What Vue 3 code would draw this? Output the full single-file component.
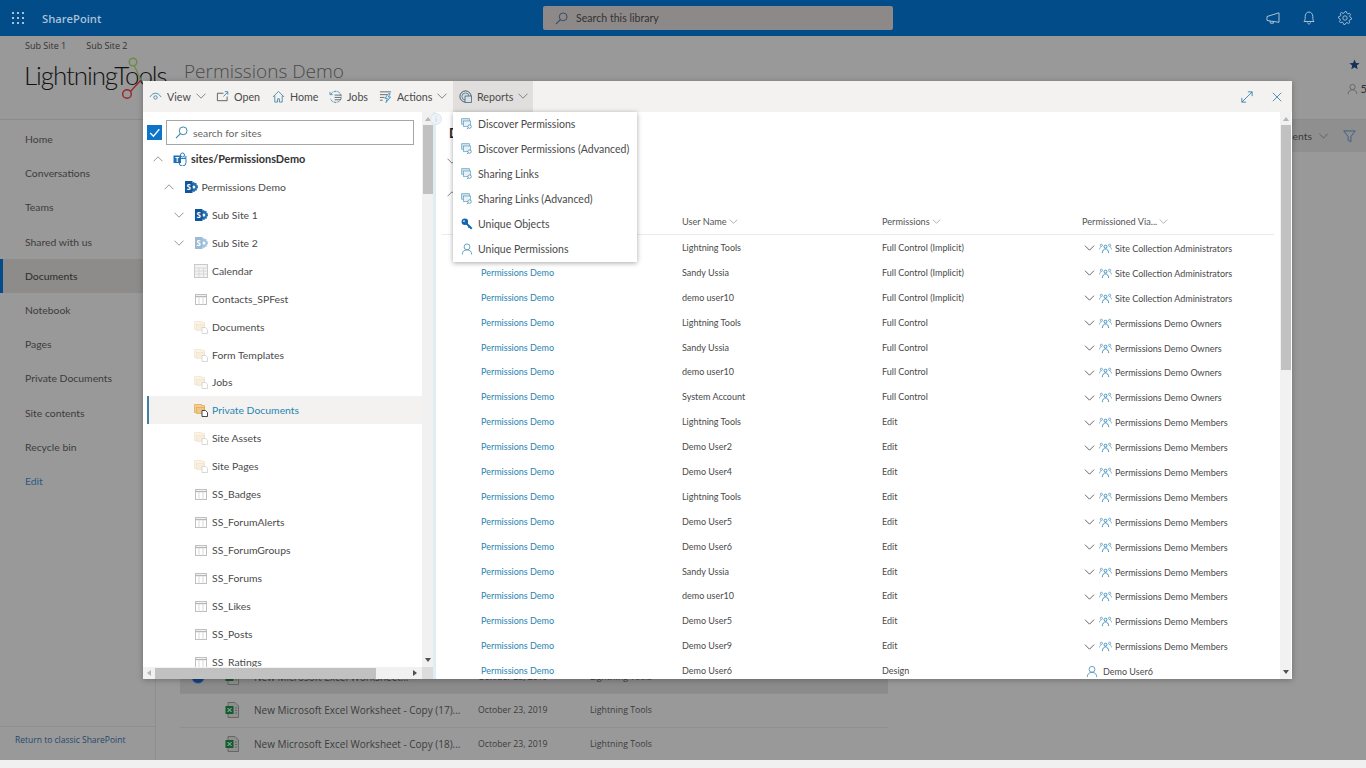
<script setup>
const nav = ['Home','Conversations','Teams','Shared with us','Documents','Notebook','Pages','Private Documents','Site contents','Recycle bin','Edit']

const tools = [
  { label: 'View', icon: 'i-eye', chev: true, cls: 'w-view' },
  { label: 'Open', icon: 'i-open', cls: 'w-open' },
  { label: 'Home', icon: 'i-home', cls: 'w-home' },
  { label: 'Jobs', icon: 'i-jobs', cls: 'w-jobs' },
  { label: 'Actions', icon: 'i-actions', chev: true, cls: 'w-actions' },
  { label: 'Reports', icon: 'i-reports', chev: true, cls: 'w-reports active' }
]

const tree = [
  { t: 'sites/PermissionsDemo', lvl: 0, icon: 'i-teams', chev: 'up', bold: true },
  { t: 'Permissions Demo', lvl: 1, icon: 'i-sp', chev: 'up' },
  { t: 'Sub Site 1', lvl: 2, icon: 'i-sp', chev: 'down' },
  { t: 'Sub Site 2', lvl: 2, icon: 'i-sp', chev: 'down', faded: true },
  { t: 'Calendar', lvl: 2, icon: 'i-cal' },
  { t: 'Contacts_SPFest', lvl: 2, icon: 'i-list' },
  { t: 'Documents', lvl: 2, icon: 'i-lib' },
  { t: 'Form Templates', lvl: 2, icon: 'i-lib' },
  { t: 'Jobs', lvl: 2, icon: 'i-lib' },
  { t: 'Private Documents', lvl: 2, icon: 'i-lib-on', sel: true },
  { t: 'Site Assets', lvl: 2, icon: 'i-lib' },
  { t: 'Site Pages', lvl: 2, icon: 'i-lib' },
  { t: 'SS_Badges', lvl: 2, icon: 'i-list' },
  { t: 'SS_ForumAlerts', lvl: 2, icon: 'i-list' },
  { t: 'SS_ForumGroups', lvl: 2, icon: 'i-list' },
  { t: 'SS_Forums', lvl: 2, icon: 'i-list' },
  { t: 'SS_Likes', lvl: 2, icon: 'i-list' },
  { t: 'SS_Posts', lvl: 2, icon: 'i-list' },
  { t: 'SS_Ratings', lvl: 2, icon: 'i-list' }
]

const menu = [
  { t: 'Discover Permissions', icon: 'i-report' },
  { t: 'Discover Permissions (Advanced)', icon: 'i-report' },
  { t: 'Sharing Links', icon: 'i-report' },
  { t: 'Sharing Links (Advanced)', icon: 'i-report' },
  { t: 'Unique Objects', icon: 'i-key' },
  { t: 'Unique Permissions', icon: 'i-person' }
]

const sca = 'Site Collection Administrators'
const own = 'Permissions Demo Owners'
const mem = 'Permissions Demo Members'
const rows = [
  ['Lightning Tools','Full Control (Implicit)',sca],
  ['Sandy Ussia','Full Control (Implicit)',sca],
  ['demo user10','Full Control (Implicit)',sca],
  ['Lightning Tools','Full Control',own],
  ['Sandy Ussia','Full Control',own],
  ['demo user10','Full Control',own],
  ['System Account','Full Control',own],
  ['Lightning Tools','Edit',mem],
  ['Demo User2','Edit',mem],
  ['Demo User4','Edit',mem],
  ['Lightning Tools','Edit',mem],
  ['Demo User5','Edit',mem],
  ['Demo User6','Edit',mem],
  ['Sandy Ussia','Edit',mem],
  ['demo user10','Edit',mem],
  ['Demo User5','Edit',mem],
  ['Demo User9','Edit',mem],
  ['Demo User6','Design','Demo User6',true]
]

const docs = [
  { t: 'New Microsoft Excel Worksheet...', sel: true },
  { t: 'New Microsoft Excel Worksheet - Copy (17)...' },
  { t: 'New Microsoft Excel Worksheet - Copy (18)...' }
]

const gearPath = (() => {
  const pts = []
  const teeth = 8
  for (let i = 0; i < teeth * 4; i++) {
    const a = (i / (teeth * 4)) * Math.PI * 2
    const r = i % 4 < 2 ? 6.6 : 5
    pts.push((7 + r * Math.cos(a)).toFixed(2) + ' ' + (7 + r * Math.sin(a)).toFixed(2))
  }
  return 'M' + pts.join('L') + 'Z'
})()
</script>

<template>
  <div class="page">
    <svg class="defs" aria-hidden="true">
      <symbol id="i-chev" viewBox="0 0 10 6"><path d="M.5.7 5 5.2 9.5.7" fill="none" stroke="currentColor" stroke-width=".9"/></symbol>
      <symbol id="i-chev-up" viewBox="0 0 10 6"><path d="M.5 5.3 5 .8l4.500 4.500" fill="none" stroke="currentColor" stroke-width=".9"/></symbol>
      <symbol id="i-search" viewBox="0 0 14 14"><circle cx="8.800" cy="5.200" r="4.200" fill="none" stroke="currentColor" stroke-width="1"/><path d="M5.800 8.200 1 13" stroke="currentColor" stroke-width="1.100"/></symbol>
      <symbol id="i-eye" viewBox="0 0 14 14"><path d="M1 7.500C3 4.500 5 3.500 7 3.500s4 1 6 4" fill="none" stroke="#3f88ad" stroke-width="1"/><circle cx="7" cy="8" r="1.800" fill="none" stroke="#3f88ad" stroke-width="1"/></symbol>
      <symbol id="i-open" viewBox="0 0 14 14"><path d="M8 3.500H1.500v8H12V7" fill="none" stroke="#4a4a4a" stroke-width=".9"/><path d="M8 7l4.500-4.500M9.500 1.800h3.200v3.200" fill="none" stroke="#3f88ad" stroke-width="1"/></symbol>
      <symbol id="i-home" viewBox="0 0 14 14"><path d="M1 7.500 7 1.500l6 6M3 6v7h3V9.500h2V13h3V6" fill="none" stroke="#3f7f9f" stroke-width=".9"/></symbol>
      <symbol id="i-jobs" viewBox="0 0 14 14"><path d="M2 4.500A6 6 0 1 1 1.500 9" fill="none" stroke="#3f88ad" stroke-width="1" stroke-dasharray="3 1"/><path d="M1 2v3h3" fill="none" stroke="#3f88ad" stroke-width=".9"/><path d="M6 5.500h7M6 8h7M6 10.500h7" stroke="#555" stroke-width=".9"/></symbol>
      <symbol id="i-actions" viewBox="0 0 14 14"><path d="M1 2h12M1 5h8M1 8h5M1 11h3" stroke="#555" stroke-width=".9"/><path d="M10 4 6.500 9H9l-1.500 4.500L12.500 7.500H10L12 4z" fill="none" stroke="#2f88b5" stroke-width=".9"/></symbol>
      <symbol id="i-reports" viewBox="0 0 14 14"><circle cx="7" cy="7" r="6" fill="none" stroke="#4a4a4a" stroke-width="1"/><circle cx="7" cy="7" r="3.800" fill="none" stroke="#3f88ad" stroke-width="1"/><rect x="6.500" y="6.500" width="7" height="7" fill="#e1dfdd" stroke="#3f6f8f" stroke-width=".9"/></symbol>
      <symbol id="i-expand" viewBox="0 0 14 14"><path d="M1 13 13 1M8 1h5v5M1 8v5h5" fill="none" stroke="#2f7ea8" stroke-width="1"/></symbol>
      <symbol id="i-close" viewBox="0 0 12 12"><path d="M1 1l10 10M11 1 1 11" stroke="#2f7ea8" stroke-width="1"/></symbol>
      <symbol id="i-sp" viewBox="0 0 14 14"><circle cx="9" cy="7" r="4.200" fill="#1f6fb2" stroke="#1f6fb2" stroke-width="1.600" stroke-dasharray="1.400 1"/><circle cx="9.800" cy="7" r="1.500" fill="#fff"/><rect x="1" y="1" width="7.500" height="12" fill="#10569a"/><text x="4.750" y="10" font-size="8" font-weight="700" text-anchor="middle" fill="#fff" font-family="Open Sans, sans-serif">S</text></symbol>
      <symbol id="i-teams" viewBox="0 0 14 14"><circle cx="9.500" cy="3" r="2" fill="none" stroke="#2b7cc0"/><circle cx="12.500" cy="5" r="1.300" fill="#6fa8d0"/><path d="M6 6.500h7v4a3.500 3.500 0 0 1-7 0z" fill="none" stroke="#2b7cc0"/><rect x="0.500" y="3.500" width="7.500" height="7.500" fill="#1f6fb2"/><text x="4.250" y="9.600" font-size="6.500" font-weight="700" text-anchor="middle" fill="#fff" font-family="Open Sans, sans-serif">T</text></symbol>
      <symbol id="i-cal" viewBox="0 0 14 14"><rect x=".5" y=".5" width="13" height="13" fill="#f4f3f2" stroke="#c9c9c9"/><path d="M.5 4h13M.5 7h13M.5 10h13M5 4v9.500M9.500 4v9.500" stroke="#d2d2d2" stroke-width=".8"/></symbol>
      <symbol id="i-list" viewBox="0 0 14 14"><rect x="1.500" y="2.500" width="11" height="10" fill="#fff" stroke="#c0c0c0"/><path d="M1.500 4.500h11" stroke="#b5b5b5" stroke-width="1.400"/><path d="M5 4.500v8M9 4.500v8" stroke="#cfcfcf" stroke-width=".8"/></symbol>
      <symbol id="i-lib" viewBox="0 0 14 14"><path d="M.5 1.500h7v1h3v7h-10z" fill="#fbf3e4" stroke="#f3e6cf" stroke-width=".8"/><rect x="2.500" y="4.500" width="8" height="6" fill="#f9eedb" stroke="#f1e1c6" stroke-width=".6"/><path d="M8 7.500h3.500l2 2v4H8z" fill="#fff" stroke="#cfcfcf" stroke-width=".8"/></symbol>
      <symbol id="i-lib-on" viewBox="0 0 14 14"><path d="M.5 1.500h7v1h3v7h-10z" fill="#f3cf96" stroke="#e4a94f" stroke-width=".8"/><rect x="2.500" y="4.500" width="8" height="6" fill="#f0c684" stroke="#dd9f48" stroke-width=".6"/><path d="M8 7.500h3.500l2 2v4H8z" fill="#fff" stroke="#333" stroke-width=".9"/></symbol>
      <symbol id="i-report" viewBox="0 0 14 14"><rect x=".8" y=".8" width="9" height="6.500" fill="#cfe3ef" stroke="#5f9dbd" stroke-width=".8"/><rect x="2.800" y="3.500" width="8.500" height="6.500" fill="#e8f1f7" stroke="#5f9dbd" stroke-width=".8"/><circle cx="10" cy="10" r="2" fill="#fff" stroke="#3f88ad" stroke-width=".9"/><path d="M8.500 11.500 7 13" stroke="#3f88ad"/></symbol>
      <symbol id="i-key" viewBox="0 0 14 14"><circle cx="4.500" cy="4.500" r="3.800" fill="#1167ae"/><circle cx="3.500" cy="3.500" r="1" fill="#fff"/><path d="M6 6l6.500 6.500" stroke="#1167ae" stroke-width="2.400"/><path d="M10 9.500l-1.500 1.500" stroke="#1167ae" stroke-width="1.600"/></symbol>
      <symbol id="i-person" viewBox="0 0 14 14"><circle cx="7" cy="4.500" r="3.400" fill="none" stroke="#4f93b8" stroke-width="1"/><path d="M1.500 13.500c0-3.500 2.200-5.500 5.500-5.500s5.500 2 5.500 5.500" fill="none" stroke="#4f93b8" stroke-width="1"/></symbol>
      <symbol id="i-group" viewBox="0 0 14 12"><circle cx="7" cy="4" r="1.600" fill="none" stroke="#1f7fb0" stroke-width=".9"/><path d="M3.500 11c.3-3 1.600-4.500 3.500-4.500s3.200 1.500 3.500 4.500" fill="none" stroke="#1f7fb0" stroke-width=".9"/><circle cx="2.500" cy="2.500" r="1.200" fill="none" stroke="#4f97bf" stroke-width=".8"/><circle cx="11.500" cy="2.500" r="1.200" fill="none" stroke="#4f97bf" stroke-width=".8"/><path d="M.5 7c0-1.500.8-2.800 2-2.800M13.500 7c0-1.500-.8-2.800-2-2.800" fill="none" stroke="#4f97bf" stroke-width=".8"/></symbol>
      <symbol id="i-xl" viewBox="0 0 14 16"><path d="M3 .5h7l3.500 3.500v11.500H3z" fill="#8f8f8f" stroke="#5a5a5a" stroke-width=".8"/><rect x=".5" y="4" width="8" height="8" fill="#14592f"/><path d="M2.500 6l4 4M6.500 6l-4 4" stroke="#a8c8b0" stroke-width="1"/><path d="M10 6h2M10 8.500h2M10 11h2" stroke="#5a5a5a" stroke-width=".8"/></symbol>
      <symbol id="i-waffle" viewBox="0 0 12 12"><g fill="currentColor"><rect x="0" y="0" width="2" height="2"/><rect x="5" y="0" width="2" height="2"/><rect x="10" y="0" width="2" height="2"/><rect x="0" y="5" width="2" height="2"/><rect x="5" y="5" width="2" height="2"/><rect x="10" y="5" width="2" height="2"/><rect x="0" y="10" width="2" height="2"/><rect x="5" y="10" width="2" height="2"/><rect x="10" y="10" width="2" height="2"/></g></symbol>
      <symbol id="i-mega" viewBox="0 0 14 12"><path d="M13 .8v9.500L1 8.500v-4zM4 9l.5 2.200h3L7 9.500" fill="none" stroke="currentColor" stroke-width="1"/></symbol>
      <symbol id="i-bell" viewBox="0 0 12 14"><path d="M1 10.500c1-1 1.200-2 1.200-5C2.200 3 3.800 1 6 1s3.800 2 3.800 4.500c0 3 .2 4 1.200 5zM4.500 11.500c.2 1 .8 1.500 1.500 1.500s1.300-.5 1.500-1.500" fill="none" stroke="currentColor" stroke-width="1"/></symbol>
      <symbol id="i-gear" viewBox="0 0 14 14"><path :d="gearPath" fill="none" stroke="currentColor" stroke-width=".9"/><circle cx="7" cy="7" r="2.200" fill="none" stroke="currentColor" stroke-width=".9"/></symbol>
      <symbol id="i-filter" viewBox="0 0 14 14"><path d="M.8 1h12.400L8.500 7v5.800L5.500 11V7z" fill="none" stroke="currentColor" stroke-width="1"/></symbol>
      <symbol id="i-star" viewBox="0 0 12 12"><path d="M6 .5l1.600 3.800 4 .3-3.100 2.600 1 4L6 9l-3.500 2.200 1-4L.4 4.600l4-.3z" fill="currentColor"/></symbol>
    </svg>

    <header class="topbar">
      <svg class="waffle"><use href="#i-waffle"/></svg>
      <span class="brand">SharePoint</span>
      <div class="global-search">
        <svg class="gs-icon"><use href="#i-search"/></svg>
        <span>Search this library</span>
      </div>
      <div class="top-icons">
        <svg class="ti"><use href="#i-mega"/></svg>
        <svg class="ti"><use href="#i-bell"/></svg>
        <svg class="ti"><use href="#i-gear"/></svg>
      </div>
    </header>

    <section class="site-head">
      <div class="subnav"><span>Sub Site 1</span><span>Sub Site 2</span></div>
      <div class="site-row">
        <div class="logo">
          <span class="logo-text">LightningTools</span>
          <svg class="logo-nodes" viewBox="0 0 40 50">
            <path d="M18 23 7 35" fill="none" stroke="#94272c" stroke-width="1.300"/>
            <path d="M11 8 18 23" fill="none" stroke="#6e8a45" stroke-width="1.300"/>
            <circle cx="10" cy="5" r="3.800" fill="#999" stroke="#6e8a45" stroke-width="1.400"/>
            <circle cx="4" cy="37" r="4.300" fill="#999" stroke="#94272c" stroke-width="1.400"/>
          </svg>
        </div>
        <h1 class="site-title">Permissions Demo</h1>
        <div class="site-tools">
          <svg class="star"><use href="#i-star"/></svg>
          <div class="members"><svg class="mem-icon"><use href="#i-person"/></svg><span>5</span></div>
        </div>
      </div>
    </section>

    <div class="below">
      <nav class="leftnav">
        <ul class="nav-list">
          <li v-for="n in nav" :key="n" :class="['nav-item', { current: n === 'Documents', edit: n === 'Edit' }]">{{ n }}</li>
        </ul>
        <div class="classic">Return to classic SharePoint</div>
      </nav>
      <main class="main">
        <div class="cmdbar">
          <span class="cmd-text">All Documents</span>
          <svg class="cmd-chev"><use href="#i-chev"/></svg>
          <svg class="cmd-filter"><use href="#i-filter"/></svg>
        </div>
        <div class="doclist">
          <div v-for="d in docs" :key="d.t" :class="['doc', { selected: d.sel }]">
            <span class="doc-check"><i v-if="d.sel" class="check-dot"></i></span>
            <svg class="xl"><use href="#i-xl"/></svg>
            <span class="doc-name">{{ d.t }}</span>
            <span class="doc-date">October 23, 2019</span>
            <span class="doc-author">Lightning Tools</span>
          </div>
        </div>
      </main>
    </div>
    <div class="winstrip"></div>

    <div class="modal">
      <div class="toolbar">
        <div v-for="b in tools" :key="b.label" :class="['tbtn', b.cls]">
          <svg class="tb-icon"><use :href="'#' + b.icon"/></svg>
          <span>{{ b.label }}</span>
          <svg v-if="b.chev" class="tb-chev"><use href="#i-chev"/></svg>
        </div>
        <div class="tb-right">
          <svg class="tb-expand"><use href="#i-expand"/></svg>
          <svg class="tb-close"><use href="#i-close"/></svg>
        </div>
      </div>

      <div class="modal-body">
        <aside class="left">
          <div class="left-main">
            <div class="left-content">
              <div class="searchrow">
                <span class="checkbox"><svg viewBox="0 0 14 14"><path d="M3 7.500 6 10.500 11.500 4" fill="none" stroke="#fff" stroke-width="1.200"/></svg></span>
                <div class="searchbox">
                  <svg class="sb-icon"><use href="#i-search"/></svg>
                  <span>search for sites</span>
                </div>
              </div>
              <div class="tree">
                <div v-for="r in tree" :key="r.t" :class="['node', { sel: r.sel, bold: r.bold, faded: r.faded }]" :style="{ paddingLeft: (10 + r.lvl * 10.500) + 'px' }">
                  <span class="node-chev">
                    <svg v-if="r.chev === 'up'"><use href="#i-chev-up"/></svg>
                    <svg v-else-if="r.chev === 'down'"><use href="#i-chev"/></svg>
                  </span>
                  <svg class="node-icon"><use :href="'#' + r.icon"/></svg>
                  <span class="node-text">{{ r.t }}</span>
                </div>
              </div>
            </div>
            <div class="vscroll">
              <i class="arrow up"></i>
              <i class="thumb short"></i>
              <i class="flex-fill"></i>
              <i class="arrow down"></i>
            </div>
          </div>
          <div class="hscroll">
            <i class="arrow left-a"></i>
            <i class="hthumb"></i>
            <i class="flex-fill"></i>
            <i class="arrow right-a"></i>
            <i class="corner"></i>
          </div>
        </aside>

        <div class="splitter"><span class="info-dot">i</span></div>

        <section class="right">
          <div class="right-content">
            <h2 class="report-title">Discover Permissions</h2>
            <div class="grp"><svg><use href="#i-chev"/></svg></div>
            <div class="grp g2"><svg><use href="#i-chev-up"/></svg></div>
            <div class="thead">
              <span class="th">Site<svg><use href="#i-chev"/></svg></span>
              <span class="th">User Name<svg><use href="#i-chev"/></svg></span>
              <span class="th">Permissions<svg><use href="#i-chev"/></svg></span>
              <span class="th">Permissioned Via...<svg><use href="#i-chev"/></svg></span>
            </div>
            <div v-for="(r, i) in rows" :key="i" class="trow">
              <span class="link">Permissions Demo</span>
              <span>{{ r[0] }}</span>
              <span>{{ r[1] }}</span>
              <span v-if="r[3]" class="via user"><svg class="via-person"><use href="#i-person"/></svg>{{ r[2] }}</span>
              <span v-else class="via"><svg class="via-chev"><use href="#i-chev"/></svg><svg class="via-group"><use href="#i-group"/></svg>{{ r[2] }}</span>
            </div>
          </div>
          <div class="vscroll rs">
            <i class="arrow up"></i>
            <i class="thumb long"></i>
            <i class="flex-fill"></i>
            <i class="arrow down"></i>
          </div>
        </section>

        <ul class="menu">
          <li v-for="m in menu" :key="m.t" class="menu-item">
            <svg class="menu-icon"><use :href="'#' + m.icon"/></svg>
            <span>{{ m.t }}</span>
          </li>
        </ul>
      </div>
    </div>
  </div>
</template>

<style scoped>
.page {
  position: relative;
  display: flex;
  flex-direction: column;
  width: 1366px;
  height: 768px;
  overflow: hidden;
  background: #999;
  font-family: Lato, "Open Sans", sans-serif;
  font-size: 10.500px;
  color: #3c3c3c;
}
.defs { position: absolute; width: 0; height: 0; }
svg { display: block; flex: none; }

/* top bar */
.topbar {
  flex: none;
  position: relative;
  height: 36px;
  background: #014c89;
  display: flex;
  align-items: center;
  color: #a9c2d6;
}
.waffle { width: 12px; height: 12px; margin-left: 12px; color: #a9c2d6; }
.brand { margin-left: 18px; font-family: "Open Sans", sans-serif; font-size: 11.200px; font-weight: 600; }
.global-search {
  position: absolute;
  left: 543px;
  top: 6px;
  width: 350px;
  height: 24px;
  box-sizing: border-box;
  background: #8d8989;
  border-radius: 2px;
  display: flex;
  align-items: center;
  padding-left: 12px;
  color: #333;
  font-size: 10.600px;
}
.gs-icon { width: 13px; height: 13px; margin-right: 8px; color: #33495c; }
.top-icons { margin-left: auto; display: flex; align-items: center; gap: 22px; padding-right: 14px; }
.ti { width: 14px; height: 14px; color: #a9c2d6; }

/* site header */
.site-head { flex: none; height: 84px; box-sizing: border-box; padding-left: 25px; border-bottom: 1px solid #8b8b8b; }
.subnav { display: flex; gap: 20px; padding-top: 3px; font-family: "Open Sans", sans-serif; font-size: 9px; line-height: 13px; color: #333; }
.site-row { display: flex; align-items: flex-start; margin-top: 5px; }
.logo { position: relative; width: 159px; height: 45px; }
.logo-text { position: absolute; left: -1px; top: 0; font-family: Lato, sans-serif; font-weight: 300; font-size: 26px; line-height: 36px; color: #111; letter-spacing: -1.100px; white-space: nowrap; }
.logo-nodes { position: absolute; left: 98px; top: 0; width: 40px; height: 50px; overflow: visible; }
.site-title { margin: 1px 0 0; font-family: "Open Sans", sans-serif; font-size: 19px; font-weight: 300; line-height: 26px; color: #4a4a4a; }
.site-tools { margin-left: auto; display: flex; flex-direction: column; align-items: flex-end; padding-top: 2px; gap: 12px; width: 40px; }
.star { width: 11px; height: 11px; color: #14305a; margin-right: 6px; }
.members { display: flex; align-items: center; gap: 3px; color: #333; margin-right: -1px; font-size: 11px; }
.mem-icon { width: 11px; height: 12px; opacity: .75; filter: grayscale(1) brightness(.55); }

/* lower page */
.below { flex: 1; min-height: 0; display: flex; }
.leftnav { width: 156px; flex: none; box-sizing: border-box; border-right: 1px solid #8f8f8f; display: flex; flex-direction: column; justify-content: space-between; }
.nav-list { list-style: none; margin: 2px 0 0; padding: 0; }
.nav-item { height: 34.200px; line-height: 34.200px; padding-left: 25px; box-sizing: border-box; color: #3c3c3c; font-size: 10.400px; }
.nav-item.current { background: #8e8c8b; border-left: 3px solid #014c89; padding-left: 22px; color: #2b2b2b; }
.nav-item.edit { color: #2e5a80; }
.classic { height: 33px; line-height: 26px; padding-left: 15px; border-top: 1px solid #8f8f8f; color: #25486b; font-family: "Open Sans", sans-serif; font-size: 8.500px; }

.main { flex: 1; min-width: 0; display: flex; flex-direction: column; justify-content: space-between; }
.cmdbar { height: 32px; background: #8f8f8f; display: flex; align-items: center; justify-content: flex-end; padding-right: 10px; }
.cmd-text { font-size: 10.400px; color: #3c3c3c; }
.cmd-chev { width: 9px; height: 6px; margin-left: 7px; color: #555; }
.cmd-filter { width: 13px; height: 13px; margin-left: 15px; color: #3b5a85; }
.doclist { margin-left: 24px; width: 708px; }
.doc { display: flex; align-items: center; height: 33.500px; border-top: 1px solid #8f8f8f; box-sizing: border-box; font-family: "Open Sans", sans-serif; font-size: 10px; color: #3c3c3c; }
.doc.selected { background: #8b8b8b; }
.doc-check { width: 45px; flex: none; display: flex; padding-left: 11px; box-sizing: border-box; }
.check-dot { width: 12px; height: 12px; border-radius: 50%; background: #16437a; border: 1px solid #5b7fa8; }
.xl { width: 14px; height: 16px; margin-right: 15px; }
.doc-name { width: 224px; flex: none; white-space: nowrap; }
.doc-date { width: 112px; flex: none; font-size: 8.700px; }
.doc-author { font-size: 8.800px; }
.winstrip { flex: none; height: 8px; background: #f0f0f0; }

/* modal */
.modal {
  position: absolute;
  left: 143px;
  top: 81px;
  width: 1149px;
  height: 598px;
  background: #fff;
  display: flex;
  flex-direction: column;
  box-shadow: 0 1px 6px rgba(0,0,0,.28);
}
.toolbar { flex: none; height: 31px; background: #f3f2f1; display: flex; align-items: stretch; color: #4a4a4a; font-size: 10.700px; }
.tbtn { display: flex; align-items: center; padding: 0 0 1px 6px; box-sizing: border-box; }
.tbtn span { margin-left: 5px; }
.w-view { width: 67px; }
.w-open { width: 56px; }
.w-home { width: 57px; }
.w-jobs { width: 50px; }
.w-actions { width: 80px; }
.w-reports { width: 80px; }
.tbtn.active { background: #e1dfdd; }
.tb-icon { width: 13px; height: 13px; }
.tb-chev { width: 10px; height: 6px; margin-left: 5px; color: #777; }
.tb-right { margin-left: auto; display: flex; align-items: center; padding-right: 10px; gap: 19px; }
.tb-expand { width: 12px; height: 12px; }
.tb-close { width: 10px; height: 10px; }

.modal-body { position: relative; flex: 1; min-height: 0; display: flex; }
.left { width: 290px; flex: none; display: flex; flex-direction: column; }
.left-main { flex: 1; min-height: 0; display: flex; }
.left-content { flex: 1; min-width: 0; overflow: hidden; }
.searchrow { height: 33px; display: flex; align-items: flex-end; padding-left: 4px; }
.checkbox { width: 15px; height: 15px; background: #0c74c9; margin-bottom: 5px; margin-right: 4px; }
.checkbox svg { width: 15px; height: 15px; }
.searchbox { width: 248px; height: 25px; box-sizing: border-box; border: 1px solid #a6a6a6; background: #fff; display: flex; align-items: center; padding-left: 8px; color: #666; font-size: 10.400px; }
.sb-icon { width: 13px; height: 13px; margin-right: 5px; color: #2f7ea8; }
.node { height: 27.950px; display: flex; align-items: center; box-sizing: border-box; color: #4a4a4a; font-size: 10.400px; position: relative; white-space: nowrap; }
.node-chev { width: 11px; height: 6px; flex: none; color: #8a8a8a; margin-right: 9px; }
.node-chev svg { width: 10px; height: 6px; }
.node-icon { width: 14px; height: 14px; margin-right: 4px; }
.node.bold { font-weight: 700; color: #333; font-size: 10.900px; }
.node.faded .node-icon { opacity: .4; }
.node.sel { background: #f3f2f1; color: #2a84b0; margin-left: 4px; }
.node.sel::before { content: ""; position: absolute; left: 0; top: 0; bottom: 0; width: 2px; background: #3f7f9f; }
.node.sel .node-chev { margin-left: -4px; }

.vscroll { width: 11px; flex: none; background: #f1f1f1; display: flex; flex-direction: column; align-items: center; }
.vscroll .arrow.up { margin-top: 5px; margin-bottom: 4px; }
.vscroll .arrow.down { margin-top: 4px; margin-bottom: 5px; }
.thumb { display: block; width: 10px; background: #c1c1c1; flex: none; margin-left: 1px; }
.thumb.short { height: 69px; }
.thumb.long { height: 245px; }
.flex-fill { flex: 1; display: block; }
.arrow { display: block; width: 0; height: 0; flex: none; border-style: solid; border-color: transparent; }
.arrow.up { border-width: 0 3px 4px; border-bottom-color: #b5b5b5; }
.arrow.down { border-width: 4px 3px 0; border-top-color: #505050; }
.arrow.left-a { border-width: 3px 4px 3px 0; border-right-color: #b5b5b5; margin-left: 4px; }
.arrow.right-a { border-width: 3px 0 3px 4px; border-left-color: #505050; margin-right: 5px; }
.hscroll { flex: none; height: 12px; background: #f1f1f1; display: flex; align-items: center; }
.hthumb { display: block; width: 221px; height: 11px; background: #c1c1c1; margin-left: 4px; }
.corner { display: block; width: 11px; height: 12px; background: #dcdcdc; }

.splitter { position: relative; width: 3px; flex: none; background: #e3ecf3; }
.info-dot { position: absolute; left: -3px; top: 1px; width: 10px; height: 10px; border-radius: 50%; background: #edf3f8; border: 1px solid #dce7ef; color: #b9cbd8; font-size: 7px; line-height: 10px; text-align: center; }

.right { flex: 1; min-width: 0; display: flex; }
.right-content { flex: 1; min-width: 0; overflow: hidden; }
.report-title { margin: 0; padding: 10px 0 0 13px; height: 32px; box-sizing: border-box; font-size: 13px; line-height: 22px; font-weight: 700; color: #222; }
.grp { height: 33px; padding: 14px 0 0 11px; box-sizing: border-box; color: #777; }
.grp.g2 { height: 32px; }
.grp svg { width: 10px; height: 6px; }
.thead { display: grid; grid-template-columns: 201px 200px 200px 1fr; height: 26px; margin: 0 6px; padding-left: 39px; border-bottom: 1px solid #edebe9; align-items: center; box-sizing: border-box; color: #555; font-size: 9.200px; }
.th { display: flex; align-items: center; gap: 2px; }
.th svg { width: 9px; height: 5px; color: #999; }
.trow { display: grid; grid-template-columns: 201px 200px 200px 1fr; height: 24.900px; padding-left: 45px; align-items: center; font-size: 9px; color: #4a4a4a; white-space: nowrap; }
.link { color: #2a84b0; }
.via { display: flex; align-items: center; position: relative; top: 1px; }
.via-chev { width: 11px; height: 6px; margin-left: 2px; color: #555; }
.via-group { width: 13px; height: 11px; margin: 0 3px 0 4px; }
.via-person { width: 12px; height: 13px; margin: 0 5px 0 4px; }
.rs { margin-right: 1px; }

/* menu */
.menu {
  position: absolute;
  left: 310px;
  top: 0;
  width: 184px;
  height: 150px;
  margin: 0;
  padding: 0;
  box-sizing: border-box;
  list-style: none;
  background: #fff;
  box-shadow: 0 1px 5px rgba(0,0,0,.35);
}
.menu-item { height: 24.900px; display: flex; align-items: center; padding-left: 8px; color: #4a4a4a; font-size: 10.500px; white-space: nowrap; }
.menu-icon { width: 12px; height: 12px; margin-right: 5px; }
</style>
